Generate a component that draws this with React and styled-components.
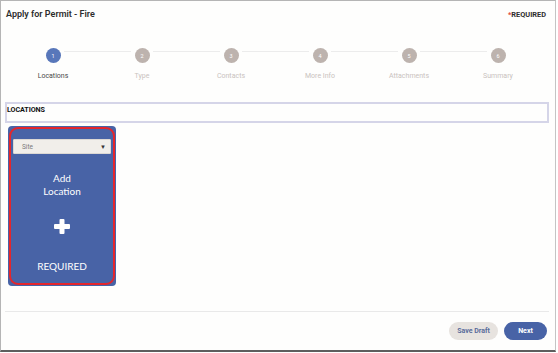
import React from "react";
import styled, { createGlobalStyle } from "styled-components";

const Global = createGlobalStyle`
  html, body { margin: 0; padding: 0; background: #ffffff; }
  body { font-family: Roboto, "Liberation Sans", sans-serif; }
  * { box-sizing: border-box; }
`;

const Frame = styled.div`
  width: 556px;
  height: 352px;
  border-top: 1px solid #b5b5b5;
  border-left: 1px solid #b5b5b5;
  border-right: 1px solid #c4c4c4;
  border-bottom: 2px solid #5e5e5e;
  background: #fefefd;
  display: flex;
  flex-direction: column;
  padding: 0 6px 0 4px;
  overflow: hidden;
`;

const Header = styled.div`
  display: flex;
  justify-content: space-between;
  align-items: center;
  height: 12px;
  margin-top: 7px;
  padding: 0 3px 0 1px;
`;

const Title = styled.div`
  font-family: Roboto, "Liberation Sans", sans-serif;
  font-weight: 600;
  font-size: 9px;
  color: #2d2d2d;
`;

const Required = styled.div`
  font-family: Roboto, "Liberation Sans", sans-serif;
  font-weight: 700;
  font-size: 7.4px;
  color: #2d2d2d;
  span { color: #e0463b; }
`;

const Stepper = styled.div`
  display: grid;
  grid-template-columns: repeat(6, 89px);
  margin: 28px 0 0 3.5px;
`;

const Step = styled.div`
  position: relative;
  display: flex;
  flex-direction: column;
  align-items: center;
  &:not(:first-child)::before {
    content: "";
    position: absolute;
    top: 3px;
    height: 1px;
    background: #ececec;
    left: calc(-50% + 11px);
    right: calc(50% + 11px);
  }
`;

const Circle = styled.div`
  width: 15px;
  height: 15px;
  border-radius: 50%;
  background: ${(p) => (p.$active ? "#5877ba" : "#bdb3ae")};
  color: #fff;
  font-size: 5.5px;
  display: flex;
  align-items: center;
  justify-content: center;
`;

const StepLabel = styled.div`
  margin-top: 8px;
  font-size: 7px;
  line-height: 10px;
  color: ${(p) => (p.$active ? "#4a4a4a" : "#c9c2be")};
`;

const SectionBox = styled.div`
  margin-top: 21px;
  height: 21px;
  border: 2px solid #d5d5e8;
  padding: 2px 0 0 0;
  font-family: Roboto, "Liberation Sans", sans-serif;
  font-weight: 700;
  font-size: 7.2px;
  line-height: 8px;
  color: #111;
  letter-spacing: -0.1px;
`;

const Card = styled.div`
  margin: 3px 0 0 3px;
  width: 108px;
  height: 160px;
  background: #4863a6;
  border-radius: 4px;
  padding: 1px;
`;

const CardInner = styled.div`
  height: 100%;
  border: 2px solid #e4262c;
  border-radius: 9px;
  padding: 10px 2px 0 2px;
  display: flex;
  flex-direction: column;
  align-items: center;
  font-family: Lato, "Open Sans", sans-serif;
  color: #ffffff;
`;

const Select = styled.div`
  width: 98px;
  height: 15px;
  background: #f1eeea;
  border: 1px solid #dcd8d4;
  border-radius: 1px;
  display: flex;
  align-items: center;
  justify-content: space-between;
  padding: 0 4px 0 8px;
  font-family: Roboto, "Liberation Sans", sans-serif;
  font-size: 6.5px;
  color: #7a7a7a;
`;

const Caret = styled.span`
  font-size: 6px;
  color: #333;
`;

const AddText = styled.div`
  margin-top: 18px;
  font-size: 10px;
  line-height: 13px;
  text-align: center;
`;

const PlusWrap = styled.div`
  margin-top: 21px;
  line-height: 0;
`;

const CardRequired = styled.div`
  margin-top: 26px;
  font-size: 10px;
  line-height: 13px;
`;

const Divider = styled.div`
  margin-top: 25px;
  height: 1px;
  background: #e9e9e9;
`;

const Footer = styled.div`
  display: flex;
  justify-content: flex-end;
  gap: 6px;
  padding: 10px 2px 0 0;
`;

const Button = styled.button`
  height: 18px;
  border: none;
  border-radius: 9px;
  padding: 0;
  width: ${(p) => (p.$primary ? "43px" : "49px")};
  background: ${(p) => (p.$primary ? "#4863a6" : "#e7e3df")};
  color: ${(p) => (p.$primary ? "#ffffff" : "#596c9b")};
  font-family: Roboto, "Liberation Sans", sans-serif;
  font-weight: 700;
  font-size: 7px;
  cursor: pointer;
`;

const steps = ["Locations", "Type", "Contacts", "More Info", "Attachments", "Summary"];

function Plus() {
  return (
    <svg width="16" height="15" viewBox="0 0 16 15">
      <rect x="5.5" y="0" width="5" height="15" rx="1" fill="#fff" />
      <rect x="0" y="5" width="16" height="5" rx="1" fill="#fff" />
    </svg>
  );
}

export default function App() {
  return (
    <>
      <Global />
      <Frame>
        <Header>
          <Title>Apply for Permit - Fire</Title>
          <Required>
            <span>*</span>REQUIRED
          </Required>
        </Header>
        <Stepper>
          {steps.map((s, i) => (
            <Step key={s}>
              <Circle $active={i === 0}>{i + 1}</Circle>
              <StepLabel $active={i === 0}>{s}</StepLabel>
            </Step>
          ))}
        </Stepper>
        <SectionBox>LOCATIONS</SectionBox>
        <Card>
          <CardInner>
            <Select>
              <span>Site</span>
              <Caret>▼</Caret>
            </Select>
            <AddText>
              Add
              <br />
              Location
            </AddText>
            <PlusWrap>
              <Plus />
            </PlusWrap>
            <CardRequired>REQUIRED</CardRequired>
          </CardInner>
        </Card>
        <Divider />
        <Footer>
          <Button>Save Draft</Button>
          <Button $primary>Next</Button>
        </Footer>
      </Frame>
    </>
  );
}
